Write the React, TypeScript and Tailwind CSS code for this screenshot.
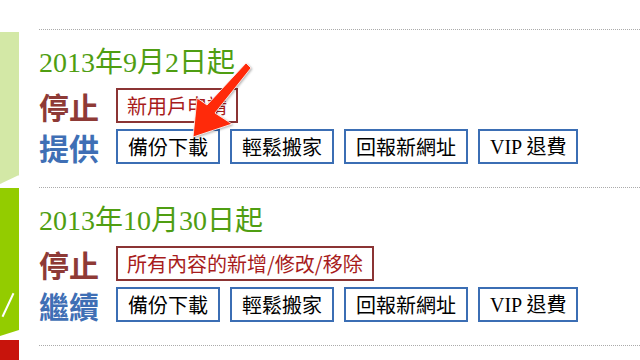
const serif = '"Liberation Serif", "Noto Sans CJK TC", serif';
const cjk = '"Noto Sans CJK TC", "Liberation Sans", sans-serif';

type Section = {
  date: string;
  stopped: string;
  keepLabel: string;
};

const sections: Section[] = [
  { date: '2013年9月2日起', stopped: '新用戶申請', keepLabel: '提供' },
  { date: '2013年10月30日起', stopped: '所有內容的新增/修改/移除', keepLabel: '繼續' },
];

const services = ['備份下載', '輕鬆搬家', '回報新網址'];

function SectionBlock({ section }: { section: Section }) {
  return (
    <div className="pt-[17px] pb-[23px] border-b border-dotted border-[#ababab]">
      <div
        className="h-[34px] mb-[7px] text-[28px] leading-[32px] text-[#4f9e12] whitespace-nowrap"
        style={{ fontFamily: serif }}
      >
        {section.date}
      </div>
      <div className="flex flex-col gap-[6px]">
        <div className="flex items-center">
          <div
            className="w-[61px] mr-[16px] text-[30px] leading-[34px] font-bold text-[#8e3a36] whitespace-nowrap"
            style={{ fontFamily: cjk }}
          >
            停止
          </div>
          <div
            className="h-[35px] px-[9px] flex items-center border-2 border-[#8b3434] text-[20px] text-[#a81c1c] whitespace-nowrap"
            style={{ fontFamily: cjk }}
          >
            {section.stopped}
          </div>
        </div>
        <div className="flex items-center">
          <div
            className="w-[61px] mr-[16px] text-[30px] leading-[34px] font-bold text-[#3f6fb5] whitespace-nowrap"
            style={{ fontFamily: cjk }}
          >
            {section.keepLabel}
          </div>
          <div className="flex gap-[10px]">
            {services.map((s) => (
              <div
                key={s}
                className="h-[35px] px-[10px] flex items-center border-2 border-[#3b6eb4] text-[20px] text-black whitespace-nowrap"
                style={{ fontFamily: cjk }}
              >
                {s}
              </div>
            ))}
            <div
              className="h-[35px] px-[10px] flex items-center border-2 border-[#3b6eb4] text-[20px] text-black whitespace-nowrap"
              style={{ fontFamily: serif }}
            >
              VIP 退費
            </div>
          </div>
        </div>
      </div>
    </div>
  );
}

export default function App() {
  return (
    <div className="relative w-[640px] h-[360px] overflow-hidden bg-white flex">
      {/* side tabs */}
      <div className="w-[19px] shrink-0 pt-[32px] flex flex-col gap-[4px]">
        <div className="shrink-0 h-[152px] bg-[#d3e8a6] shadow-[2px_0_3px_rgba(0,0,0,0.25)] [clip-path:polygon(0_0,100%_0,100%_94%,0_100%)]" />
        <div className="relative shrink-0 h-[148px] bg-[#93cc00] [clip-path:polygon(0_0,100%_0,100%_96%,0_100%)]">
          <div className="absolute left-[7px] top-[104px] w-[2px] h-[26px] bg-white rotate-[25deg]" />
        </div>
        <div className="shrink-0 h-[40px] bg-[#c8140c]" />
      </div>

      {/* content */}
      <div className="ml-[20px] flex-1 pt-[29px]">
        <div className="border-t border-dotted border-[#ababab]" />
        {sections.map((s) => (
          <SectionBlock key={s.date} section={s} />
        ))}
      </div>

      {/* callout arrow */}
      <svg
        className="absolute left-0 top-0 pointer-events-none"
        width="640"
        height="360"
        viewBox="0 0 640 360"
      >
        <polygon
          points="193,137 197,98 207,105 246,63 251,68 215,113 232,124"
          fill="#ff2a0a"
          stroke="#ffffff"
          strokeWidth="0.8"
          strokeLinejoin="round"
          style={{ filter: 'drop-shadow(1px 1px 1px rgba(0,0,0,0.3))' }}
        />
      </svg>
    </div>
  );
}
